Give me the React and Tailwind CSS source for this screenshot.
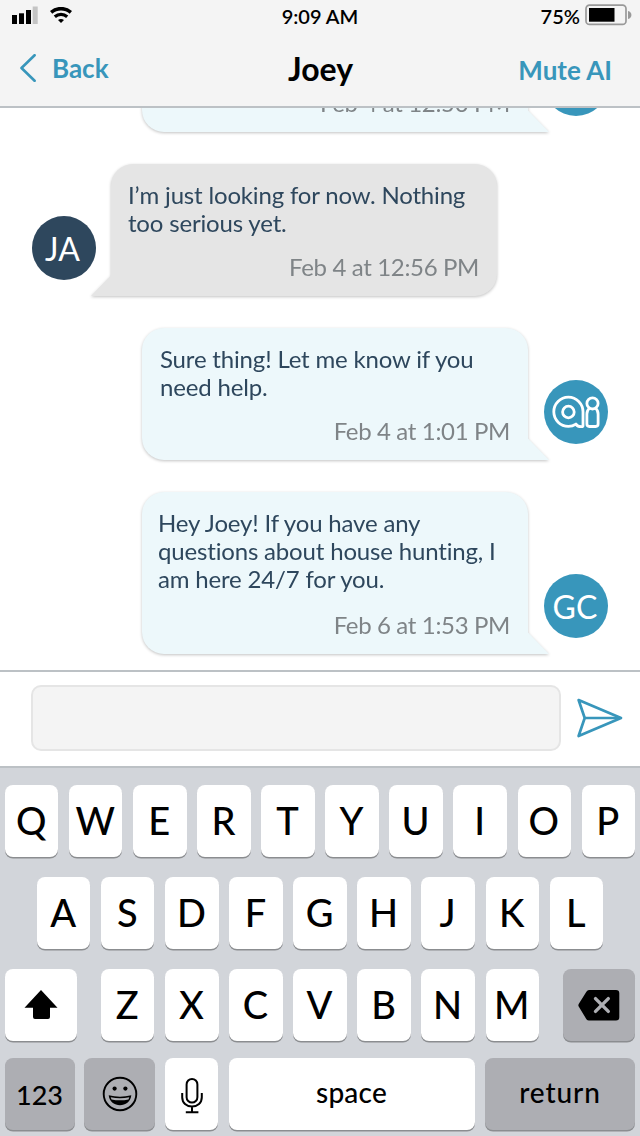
import React from "react";

const messages = [
  {
    side: "right",
    avatar: "logo",
    lines: ["Of course! What are you looking", "for today?"],
    time: "Feb 4 at 12:50 PM",
  },
  {
    side: "left",
    avatar: "JA",
    lines: ["I’m just looking for now. Nothing", "too serious yet."],
    time: "Feb 4 at 12:56 PM",
  },
  {
    side: "right",
    avatar: "logo",
    lines: ["Sure thing! Let me know if you", "need help."],
    time: "Feb 4 at 1:01 PM",
  },
  {
    side: "right",
    avatar: "GC",
    lines: ["Hey Joey! If you have any", "questions about house hunting, I", "am here 24/7 for you."],
    time: "Feb 6 at 1:53 PM",
    tall: true,
  },
];

function StatusBar() {
  return (
    <div className="flex h-8 items-center justify-between pl-3 pr-2 text-[20px] font-semibold leading-6 text-black">
      <div className="flex w-[200px] items-center gap-3">
        <svg width="26" height="18" viewBox="0 0 26 18" className="-mt-0.5">
          <rect x="0" y="9" width="5" height="9" />
          <rect x="7" y="7.3" width="5" height="10.7" />
          <rect x="14" y="4" width="5" height="14" />
          <rect x="20.7" y="0.5" width="5" height="17.5" fill="#c4c4c4" />
        </svg>
        <svg width="22" height="16" viewBox="0 0 22 16" fill="none" stroke="#000" className="-mt-0.5">
          <path d="M1.1 5.4C7 .4 15 .4 20.9 5.4" strokeWidth="3.6" />
          <path d="M4.8 9.8C8.4 6.6 13.6 6.6 17.2 9.8" strokeWidth="3.2" />
          <path d="M8 12.9c1.8-1.3 4.2-1.3 6 0l-3 3z" fill="#000" stroke="none" />
        </svg>
      </div>
      <div className="pb-px pr-1 text-center">9:09 AM</div>
      <div className="flex w-[200px] items-center justify-end gap-[5px]">
        <span className="pb-px">75%</span>
        <svg width="47" height="22" viewBox="0 0 47 22" className="-mt-0.5">
          <rect x="1" y="1.2" width="40" height="19.2" rx="3.5" fill="none" stroke="#999" strokeWidth="1.7" />
          <rect x="4" y="4" width="25.5" height="13.7" />
          <path d="M43 7c4.6.6 4.6 7.4 0 8z" fill="#999" />
        </svg>
      </div>
    </div>
  );
}

function Header() {
  return (
    <header className="h-[108px] shrink-0 border-b-2 border-[#bcc1c5] bg-[#f4f4f4]">
      <StatusBar />
      <div className="flex h-[74px] items-center justify-between pl-5 pr-[28px]">
        <button className="flex w-[160px] items-center gap-[15px] pb-0.5 text-[26px] font-bold leading-8 text-[#3896bb]">
          <svg width="17" height="28" viewBox="0 0 17 28" fill="none" stroke="currentColor" strokeWidth="2.6" strokeLinecap="round" strokeLinejoin="round">
            <path d="M14.6 1.2 1.5 14l13.1 12.8" />
          </svg>
          <span>Back</span>
        </button>
        <h1 className="pl-[9px] text-center text-[32px] font-bold leading-10 text-black">Joey</h1>
        <button className="w-[160px] pt-0.5 text-right text-[26px] font-bold leading-8 text-[#3896bb]">Mute AI</button>
      </div>
    </header>
  );
}

function Avatar({ kind }) {
  const color = kind === "JA" ? "bg-[#2e475d] pr-[3px]" : "bg-[#3896bb]";
  return (
    <div className={`mb-4 flex size-16 shrink-0 items-center justify-center rounded-full text-[32px] leading-none text-white ${color}`}>
      {kind === "logo" ? (
        <svg width="64" height="64" viewBox="0 0 64 64" fill="none" stroke="#fff" strokeWidth="2.8" strokeLinejoin="round">
          <path d="M39 45.7V31.8A14.6 14.6 0 1 0 24.5 46.4C27.5 46.4 29.7 45.6 31.9 44.1Q33.7 46.8 37.4 46.7Q39 46.7 39 45.7Z" />
          <circle cx="24.4" cy="32" r="5.8" />
          <circle cx="48.5" cy="23.4" r="5.6" />
          <path d="M45.4 28.2C43.5 29.8 42.9 31.7 42.9 34v10.1q0 2.4 2.4 2.4h6.4q2.4 0 2.4-2.4V34c0-2.3-.6-4.2-2.5-5.8" />
        </svg>
      ) : (
        <span className={kind === "GC" ? "pr-0.5 pt-px" : "pt-px"}>{kind}</span>
      )}
    </div>
  );
}

function Message({ side, avatar, lines, time, tall }) {
  const left = side === "left";
  const fill = left ? "bg-[#e5e5e5]" : "bg-[#edf8fb]";
  return (
    <div className={`flex items-end px-8 ${left ? "gap-[15px]" : "flex-row-reverse gap-4"}`}>
      <Avatar kind={avatar} />
      <div className="relative w-[386px] drop-shadow-[0_1.5px_1.5px_rgba(0,0,0,0.24)]">
        <div className={`flex flex-col justify-between pb-[15px] pr-[18px] pt-[17px] ${tall ? "h-[162px] pl-4" : "h-[132px]"} ${!tall && left ? "pl-[17px]" : ""} ${!tall && !left ? "pl-[18px]" : ""} ${left ? "rounded-[22px] rounded-bl-none" : "rounded-[22px] rounded-br-none"} ${fill}`}>
          <div className="whitespace-nowrap text-2xl leading-7 tracking-[-0.17px] text-[#2e475d]">
            {lines.map((line) => (
              <div key={line}>{line}</div>
            ))}
          </div>
          <div className="text-right text-2xl leading-7 tracking-[-0.35px] text-[#7f8487]">{time}</div>
        </div>
        <svg
          width="21"
          height="22"
          viewBox="0 0 21 22"
          className={`absolute bottom-0 ${left ? "-left-[20.5px]" : "-right-[20.5px] -scale-x-100"}`}
          fill={left ? "#e5e5e5" : "#edf8fb"}
        >
          <path d="M21 .5V22H0z" />
        </svg>
      </div>
    </div>
  );
}

function Composer() {
  return (
    <div className="flex h-[98px] shrink-0 items-center gap-[15px] border-y-2 border-[#bcc1c5] bg-white pb-0.5 pl-[31px]">
      <div className="h-[66px] w-[530px] shrink-0 rounded-[10px] border-2 border-[#e5e5e5] bg-[#f4f4f4]" />
      <svg width="47" height="40" viewBox="0 0 47 40" fill="none" stroke="#3896bb" strokeWidth="2.7" strokeLinejoin="round" className="shrink-0">
        <path d="M2.6 2 45 20 2.6 38 8.7 20Z" />
        <path d="M8.7 20H44" />
      </svg>
    </div>
  );
}

function Key({ children, className = "w-[53.4px]", gray = false }) {
  return (
    <div
      className={`flex h-[72px] shrink-0 items-center justify-center rounded-lg text-black shadow-[0_1.5px_0.5px_#8b8d90] ${gray ? "bg-[#adaeb3]" : "bg-white"} ${className}`}
    >
      {children}
    </div>
  );
}

function Letters({ row }) {
  return row.split("").map((c) => (
    <Key key={c}>
      <span className="pb-0.5 pr-px text-[38px] font-medium leading-none">{c}</span>
    </Key>
  ));
}

function Keyboard() {
  return (
    <div className="flex h-[368px] shrink-0 flex-col bg-[#d2d5da] px-[5px] pt-[17px]">
      <div className="flex justify-between">
        <Letters row="QWERTYUIOP" />
      </div>
      <div className="mt-5 flex justify-center gap-[10.7px]">
        <Letters row="ASDFGHJKL" />
      </div>
      <div className="mt-5 flex justify-between">
        <Key className="w-[72px]">
          <svg width="34" height="30" viewBox="0 0 34 30">
            <path d="M17 0 33.5 17.8H26V27q0 2-2 2H11q-2 0-2-2V17.8H.5z" />
          </svg>
        </Key>
        <div className="flex gap-[10.7px]">
          <Letters row="ZXCVBNM" />
        </div>
        <Key gray className="w-[72px]">
          <svg width="42" height="31" viewBox="0 0 42 31">
            <path d="M11 0H38q3.3 0 3.3 3.3V27.2q0 3.3-3.3 3.3H11Q9.5 30.5 8.4 29.2L.7 16.6Q0 15.3.7 14L8.4 1.8Q9.4 0 11 0Z" />
            <path d="m17.5 8.6 12.8 12.8m0-12.8-12.8 12.8" stroke="#adaeb3" strokeWidth="3.4" strokeLinecap="round" />
          </svg>
        </Key>
      </div>
      <div className="mt-[17px] flex text-[28px] font-medium leading-none">
        <Key gray className="w-[70px]">
          <span className="pr-px text-[27px]">123</span>
        </Key>
        <Key gray className="ml-[9px] w-[71px]">
          <svg width="36" height="36" viewBox="0 0 36 36" fill="none" stroke="#000" strokeWidth="1.9">
            <circle cx="18" cy="18" r="16.3" />
            <circle cx="12.6" cy="12.6" r="2.1" fill="#000" stroke="none" />
            <circle cx="23.4" cy="12.6" r="2.1" fill="#000" stroke="none" />
            <path d="M6.7 19.3Q18 22 29.3 19.3C28.2 32.5 7.8 32.5 6.7 19.3Z" fill="#000" stroke="none" />
            <path d="M8.7 21.2Q18 23.4 27.3 21.2L26.5 23.4Q18 25.2 9.5 23.4Z" fill="#adaeb3" stroke="none" />
          </svg>
        </Key>
        <Key className="ml-[10px] w-[53.4px]">
          <svg width="22" height="36" viewBox="0 0 22 36" fill="none" stroke="#000" strokeWidth="2" className="mt-1">
            <rect x="5.6" y="1" width="10.8" height="23.6" rx="5.4" />
            <path d="M1.2 15v4.2c0 5.7 4.2 9.3 9.8 9.3s9.8-3.6 9.8-9.3V15M11 28.5v5.8M4.8 34.3h12.6" />
          </svg>
        </Key>
        <Key className="ml-[10.6px] w-[246px]">
          <span className="pb-1 pr-px tracking-[0.2px]">space</span>
        </Key>
        <Key gray className="ml-[10px] w-[150px]">
          <span className="pb-1 tracking-[0.9px]">return</span>
        </Key>
      </div>
    </div>
  );
}

export default function App() {
  return (
    <div className="flex h-[1136px] w-[640px] flex-col overflow-hidden bg-white font-['Lato',sans-serif] [font-variant-ligatures:none]">
      <Header />
      <main className="flex min-h-0 flex-1 flex-col justify-end gap-8 overflow-hidden pb-4">
        {messages.map((m) => (
          <Message key={m.time} {...m} />
        ))}
      </main>
      <Composer />
      <Keyboard />
    </div>
  );
}
